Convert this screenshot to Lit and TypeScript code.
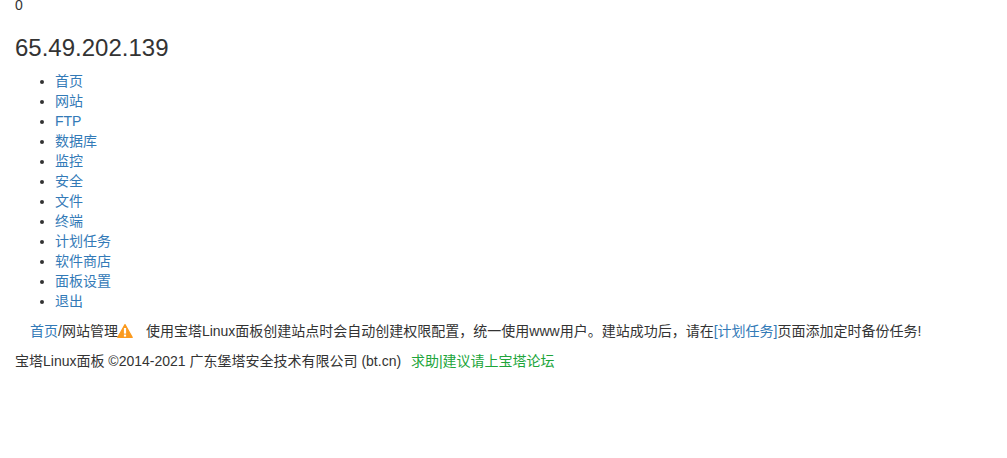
import { LitElement, html, css } from "lit";
import { customElement } from "lit/decorators.js";

const NAV = ["首页", "网站", "FTP", "数据库", "监控", "安全", "文件", "终端", "计划任务", "软件商店", "面板设置", "退出"];

@customElement("app-root")
export class AppRoot extends LitElement {
  static styles = css`
    :host {
      display: block;
      height: 458px;
      overflow: hidden;
      background: #fff;
      color: #333;
      font-family: "Liberation Sans", "Noto Sans CJK SC", sans-serif;
      font-size: 14px;
      line-height: 20px;
    }
    a {
      color: #337ab7;
      text-decoration: none;
    }
    .page {
      margin-top: -5px;
      padding-left: 15px;
    }
    .title {
      margin: 20px 0 10px;
      font-size: 24px;
      font-weight: 500;
      line-height: 26.4px;
    }
    .nav {
      margin: 0 0 10px;
      padding-left: 40px;
    }
    .notice {
      display: flex;
      align-items: center;
      height: 20px;
      padding-left: 15px;
      white-space: nowrap;
    }
    .warn {
      width: 16px;
      height: 16px;
      margin: -1px 13px 0 -1px;
      flex: none;
    }
    .footer {
      margin-top: 10px;
      white-space: nowrap;
    }
    .help {
      margin-left: 6px;
      color: #20a53a;
    }
    .help a {
      color: #20a53a;
    }
  `;

  render() {
    return html`
      <div class="page">
        <div>0</div>
        <h3 class="title">65.49.202.139</h3>
        <ul class="nav">
          ${NAV.map((n) => html`<li><a href="#">${n}</a></li>`)}
        </ul>
        <div class="notice">
          <span><a href="#">首页</a>/网站管理</span>
          <svg class="warn" viewBox="0 0 16 16" aria-hidden="true">
            <path d="M8 1.6 15.2 14.4H.8Z" fill="#fb9a1e" stroke="#fb9a1e" stroke-linejoin="round" stroke-width="1.2" />
            <rect x="6.9" y="5" width="2.2" height="5.6" fill="#fff" />
            <rect x="6.9" y="11.6" width="2.2" height="2" fill="#fff" />
          </svg>
          <span>使用宝塔Linux面板创建站点时会自动创建权限配置，统一使用www用户。建站成功后，请在<a href="#">[计划任务]</a>页面添加定时备份任务!</span>
        </div>
        <div class="footer">
          宝塔Linux面板 ©2014-2021 广东堡塔安全技术有限公司 (bt.cn)
          <span class="help"><a href="#">求助</a>|<a href="#">建议请上宝塔论坛</a></span>
        </div>
      </div>
    `;
  }
}
